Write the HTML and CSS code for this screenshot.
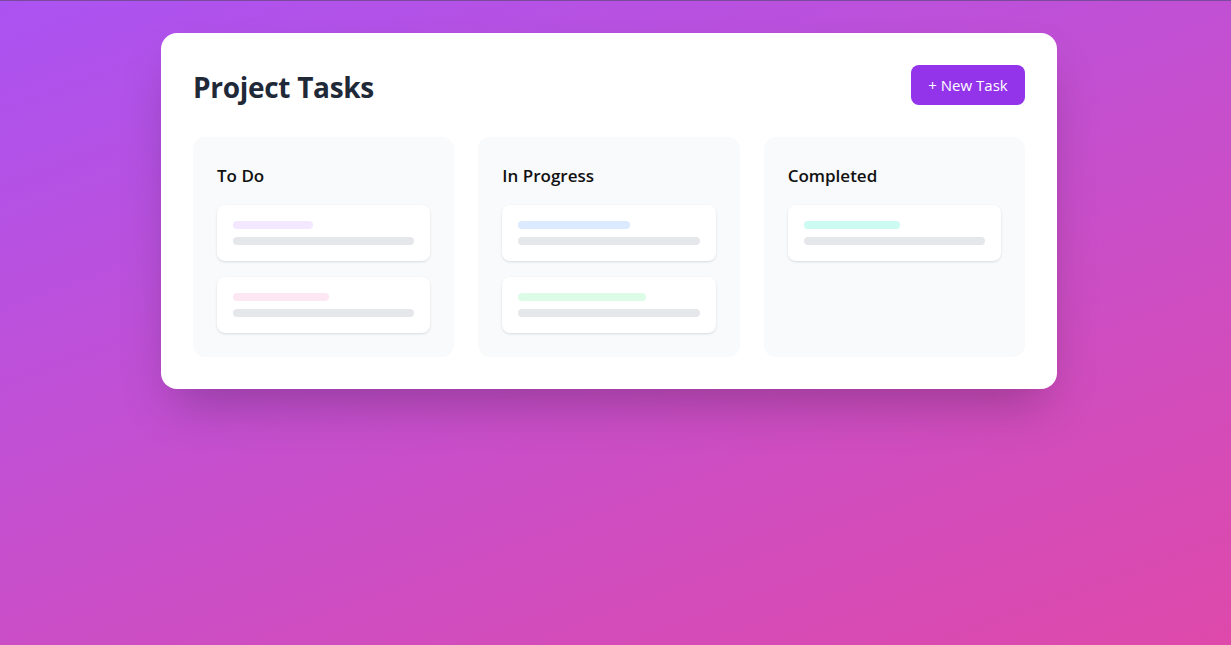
FILE: index.html
```html
<!DOCTYPE html>
<html>
<head>
<meta charset="utf-8">
<link rel="stylesheet" href="styles.css">
</head>
<body>
<div class="page">
  <div class="board">
    <div class="header">
      <h1 class="title">Project Tasks</h1>
      <button class="btn">+ New Task</button>
    </div>
    <div class="columns">
      <div class="column">
        <h2 class="col-title">To Do</h2>
        <div class="tasks">
          <div class="task"><div class="bar bar-purple" style="width:80px"></div><div class="bar bar-gray"></div></div>
          <div class="task"><div class="bar bar-pink" style="width:96px"></div><div class="bar bar-gray"></div></div>
        </div>
      </div>
      <div class="column">
        <h2 class="col-title">In Progress</h2>
        <div class="tasks">
          <div class="task"><div class="bar bar-blue" style="width:112px"></div><div class="bar bar-gray"></div></div>
          <div class="task"><div class="bar bar-green" style="width:128px"></div><div class="bar bar-gray"></div></div>
        </div>
      </div>
      <div class="column">
        <h2 class="col-title">Completed</h2>
        <div class="tasks">
          <div class="task"><div class="bar bar-teal" style="width:96px"></div><div class="bar bar-gray"></div></div>
        </div>
      </div>
    </div>
  </div>
</div>
</body>
</html>
```
FILE: styles.css
```css
* { box-sizing: border-box; }
html, body { margin: 0; padding: 0; }
body {
  height: 645px;
  overflow: hidden;
  font-family: "Open Sans", "Noto Sans", sans-serif;
  background: linear-gradient(160deg, #ab53f2 0%, #c64fcd 50%, #de49aa 100%);
  border-top: 1px solid #7a4a9c;
}
.page {
  padding: 32px 0 0 161px;
}
.board {
  width: 896px;
  background: #fff;
  border-radius: 16px;
  padding: 32px;
  box-shadow: 0 25px 50px -12px rgba(0, 0, 0, 0.25);
}
.header {
  display: flex;
  justify-content: space-between;
  align-items: center;
  height: 40px;
  margin-bottom: 32px;
}
.title {
  margin: 0;
  font-size: 28px;
  font-weight: 700;
  color: #1f2937;
  letter-spacing: -0.3px;
  line-height: 36px;
  padding-top: 3px;
}
.btn {
  font-family: inherit;
  background: #9333ea;
  color: #fff;
  border: none;
  border-radius: 8px;
  padding: 0 16px;
  height: 40px;
  width: 114px;
  font-size: 15px;
  cursor: pointer;
}
.columns {
  display: grid;
  grid-template-columns: repeat(3, 1fr);
  gap: 24px;
}
.column {
  background: #f9fafb;
  border-radius: 12px;
  padding: 24px;
}
.col-title {
  margin: 0 0 16px;
  font-size: 17px;
  font-weight: 600;
  line-height: 28px;
  color: #111;
  padding-top: 1px;
  height: 28px;
}
.tasks {
  display: flex;
  flex-direction: column;
  gap: 16px;
}
.task {
  background: #fff;
  border-radius: 8px;
  padding: 16px;
  box-shadow: 0 1px 3px rgba(0, 0, 0, 0.1), 0 1px 2px -1px rgba(0, 0, 0, 0.1);
  display: flex;
  flex-direction: column;
  gap: 8px;
}
.bar { height: 8px; border-radius: 4px; }
.bar-gray { background: #e5e7eb; width: 100%; }
.bar-purple { background: #f3e8ff; }
.bar-pink { background: #fce7f3; }
.bar-blue { background: #dbeafe; }
.bar-green { background: #dcfce7; }
.bar-teal { background: #ccfbf1; }
```
